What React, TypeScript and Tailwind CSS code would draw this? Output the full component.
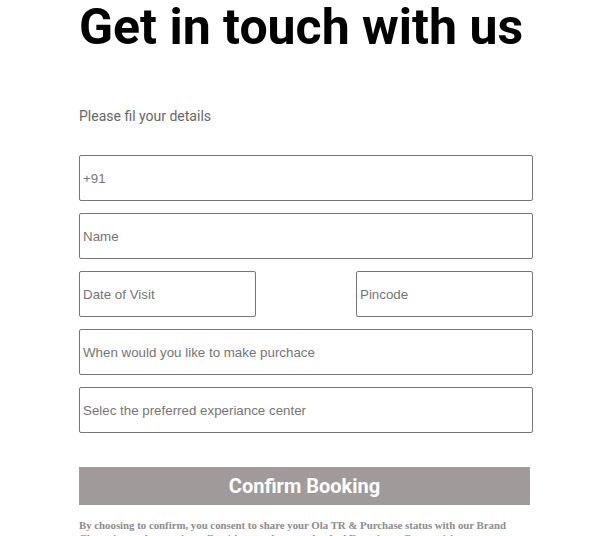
const inputCls =
  "h-[46px] rounded-[2px] border border-[#767676] px-[3px] font-['Liberation_Sans',Arial,sans-serif] text-[13.333px] placeholder:text-[#757575]";

export default function App() {
  return (
    <div className="w-[597px] h-[536px] overflow-hidden bg-white font-['Roboto',sans-serif]">
      <div className="ml-[79px] w-[454px]">
        <h1 className="text-[50px] font-bold leading-[58px] text-black -mt-[2px] whitespace-nowrap">Get in touch with us</h1>
        <p className="mt-[50px] text-[14px] leading-[20px] text-[#666]">Please fil your details</p>
        <div className="mt-[29px] flex flex-col gap-[12px]">
          <input className={`${inputCls} w-full`} placeholder="+91" />
          <input className={`${inputCls} w-full`} placeholder="Name" />
          <div className="flex justify-between">
            <input className={`${inputCls} w-[177px]`} placeholder="Date of Visit" />
            <input className={`${inputCls} w-[177px]`} placeholder="Pincode" />
          </div>
          <input className={`${inputCls} w-full`} placeholder="When would you like to make purchace" />
          <input className={`${inputCls} w-full`} placeholder="Selec the preferred experiance center" />
        </div>
        <button className="mt-[34px] h-[38px] w-[451px] bg-[#a09a9a] text-[20px] font-bold text-white">Confirm Booking</button>
        <p className="mt-[14px] w-[440px] font-['Liberation_Serif',serif] text-[10.8px] font-bold leading-[13px] text-[#8c8c8c]">
          By choosing to confirm, you consent to share your Ola TR &amp; Purchase status with our Brand Champion and to receive calls with regard to your booked Experience Centre visit.
        </p>
      </div>
    </div>
  );
}
